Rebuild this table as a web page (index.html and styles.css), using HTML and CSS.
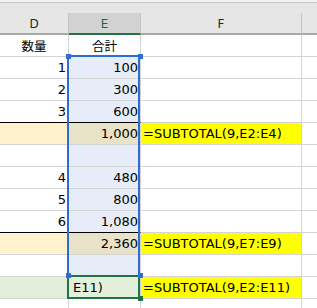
FILE: index.html
```html
<!DOCTYPE html>
<html lang="ja">
<head>
<meta charset="utf-8">
<link rel="stylesheet" href="styles.css">
</head>
<body>
<div class="frame">
  <div class="topbar"></div>
  <div class="gap"></div>
  <div class="grid">
    <div class="hd">D</div><div class="hd hd-active">E</div><div class="hd">F</div><div class="hd hd-last"></div>

    <div class="c cjk">数量</div><div class="c cjk">合計</div><div class="c"></div><div class="c last"></div>

    <div class="c num">1</div><div class="c num e">100</div><div class="c"></div><div class="c last"></div>
    <div class="c num">2</div><div class="c num e">300</div><div class="c"></div><div class="c last"></div>
    <div class="c num above-sum">3</div><div class="c num e above-sum">600</div><div class="c"></div><div class="c last"></div>
    <div class="c sum-d"></div><div class="c num sum-e">1,000</div><div class="c fx">=SUBTOTAL(9,E2:E4)</div><div class="c last"></div>
    <div class="c"></div><div class="c e"></div><div class="c"></div><div class="c last"></div>

    <div class="c num">4</div><div class="c num e">480</div><div class="c"></div><div class="c last"></div>
    <div class="c num">5</div><div class="c num e">800</div><div class="c"></div><div class="c last"></div>
    <div class="c num above-sum">6</div><div class="c num e above-sum">1,080</div><div class="c"></div><div class="c last"></div>
    <div class="c sum-d"></div><div class="c num sum-e">2,360</div><div class="c fx">=SUBTOTAL(9,E7:E9)</div><div class="c last"></div>
    <div class="c"></div><div class="c e"></div><div class="c"></div><div class="c last"></div>

    <div class="c grand"></div><div class="c grand edit">E11)</div><div class="c fx">=SUBTOTAL(9,E2:E11)</div><div class="c last"></div>
    <div class="c"></div><div class="c"></div><div class="c"></div><div class="c last"></div>
  </div>

  <div class="range"></div>
  <div class="active"></div>
  <div class="handle h-tl"></div>
  <div class="handle h-tr"></div>
  <div class="handle h-bl"></div>
  <div class="handle h-br"></div>
  <div class="fill-handle"></div>
</div>
</body>
</html>
```

FILE: styles.css
```css
* { box-sizing: border-box; }

body {
  margin: 0;
  background: #ffffff;
  font-family: "DejaVu Sans", "Noto Sans CJK JP", sans-serif;
  font-size: 13px;
  color: #000000;
}

.frame {
  position: relative;
  width: 317px;
  height: 308px;
  overflow: hidden;
}

.topbar {
  height: 3px;
  background: #f2f2f2;
  border-bottom: 1px solid #c6c6c6;
}

.gap {
  height: 10px;
  background: #e6e6e6;
}

.grid {
  display: grid;
  grid-template-columns: 69px 72px 161px 15px;
  grid-auto-rows: 22px;
}

.hd {
  background: #e6e6e6;
  border-right: 1px solid #c4c4c4;
  border-bottom: 2px solid #a8a8a8;
  display: flex;
  align-items: center;
  justify-content: center;
  font-size: 12px;
  color: #262626;
  padding-top: 1px;
}

.hd-active {
  background: #d2d2d2;
  border-bottom-color: #217346;
  color: #1e6a3c;
}

.hd-last { border-right: none; }

.c {
  border-right: 1px solid #d4d4d4;
  border-bottom: 1px solid #d4d4d4;
  padding: 0 2px;
  line-height: 21px;
  white-space: nowrap;
  overflow: hidden;
}

.c.last { border-right: none; }

.cjk {
  text-align: center;
  font-family: "Noto Sans CJK JP", sans-serif;
  font-size: 12.5px;
}

.num { text-align: right; }

.e { background: #e6edf8; }

.above-sum { border-bottom-color: #000000; }

.sum-d { background: #fff2cc; }
.sum-e { background: #e8e2c8; }

.fx {
  background: #ffff00;
  padding-left: 2px;
}

.grand { background: #e2efda; }

.edit { padding-left: 4px; }

.range {
  position: absolute;
  left: 67px;
  top: 55px;
  width: 73px;
  height: 222px;
  border: 2px solid #2f6dd0;
}

.active {
  position: absolute;
  left: 67px;
  top: 275px;
  width: 73px;
  height: 24px;
  border: 2px solid #217346;
}

.handle {
  position: absolute;
  width: 5px;
  height: 5px;
  background: #2f6dd0;
}

.h-tl { left: 66px; top: 54px; }
.h-tr { left: 138px; top: 54px; }
.h-bl { left: 66px; top: 273px; }
.h-br { left: 138px; top: 273px; }

.fill-handle {
  position: absolute;
  left: 138px;
  top: 296px;
  width: 5px;
  height: 5px;
  background: #217346;
}
```
